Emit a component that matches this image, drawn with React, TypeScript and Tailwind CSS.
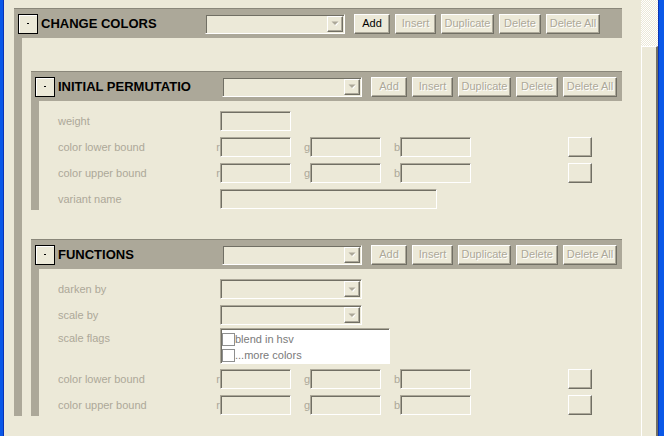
const raised =
  "border border-t-white border-l-white border-r-[#716f64] border-b-[#716f64] shadow-[inset_-1px_-1px_0_#aca899]";
const sunken =
  "border border-t-[#aca899] border-l-[#aca899] border-r-white border-b-white shadow-[inset_1px_1px_0_#716f64]";

function WinButton({ label, w, enabled = false }: { label: string; w: string; enabled?: boolean }) {
  return (
    <div
      className={`${w} h-[20px] flex items-center justify-center bg-[#ece9d8] text-[11px] ${raised} ${
        enabled ? "text-black" : "text-[#aca899] [text-shadow:1px_1px_0_#ffffff]"
      }`}
    >
      {label}
    </div>
  );
}

function Arrow() {
  return (
    <div className={`w-[16px] h-full flex items-center justify-center bg-[#ece9d8] ${raised}`}>
      <svg width="8" height="5" viewBox="0 0 8 5">
        <path d="M1 1h6L4 4.5z" fill="#ffffff" transform="translate(1 0.5)" />
        <path d="M0.5 0.5h7L4 4z" fill="#aca899" />
      </svg>
    </div>
  );
}

function Combo({ w }: { w: string }) {
  return (
    <div className={`${w} h-[20px] bg-[#ece9d8] flex justify-end p-[1px] ${sunken}`}>
      <Arrow />
    </div>
  );
}

function Input({ w }: { w: string }) {
  return <div className={`${w} h-[20px] bg-[#ece9d8] ${sunken}`} />;
}

function Section({
  title,
  addEnabled = false,
  children,
}: {
  title: string;
  addEnabled?: boolean;
  children: React.ReactNode;
}) {
  return (
    <div className="flex flex-col">
      <div className="h-[30px] flex items-center bg-[#aca899] border-t border-[#8a877a]">
        <div className="ml-[4px] w-[20px] h-[20px] flex items-center justify-center bg-[#ece9d8] border border-black shadow-[inset_1px_1px_0_#ffffff]">
          <div className="w-[2px] h-[1px] bg-black" />
        </div>
        <div className="w-[167px] pl-[3px] text-[13px] font-bold text-black whitespace-nowrap overflow-hidden">
          {title}
        </div>
        <Combo w="w-[140px]" />
        <div className="ml-[9px] flex gap-[5px]">
          <WinButton label="Add" w="w-[36px]" enabled={addEnabled} />
          <WinButton label="Insert" w="w-[41px]" />
          <WinButton label="Duplicate" w="w-[53px]" />
          <WinButton label="Delete" w="w-[42px]" />
          <WinButton label="Delete All" w="w-[54px]" />
        </div>
      </div>
      <div className="flex">
        <div className="w-[8px] bg-[#aca899]" />
        <div className="flex-1">{children}</div>
      </div>
    </div>
  );
}

function Label({ text }: { text: string }) {
  return <div className="w-[153px] text-[11px] text-[#aca899]">{text}</div>;
}

function Slot({ text, w }: { text: string; w: string }) {
  return <div className={`${w} text-right text-[11px] text-[#aca899] leading-[20px]`}>{text}</div>;
}

function ColorRow({ label }: { label: string }) {
  return (
    <div className="h-[20px] flex items-center">
      <Label text={label} />
      <Slot text="r" w="w-[9px]" />
      <Input w="w-[71px]" />
      <Slot text="g" w="w-[19px]" />
      <Input w="w-[71px]" />
      <Slot text="b" w="w-[19px]" />
      <Input w="w-[71px]" />
      <div className={`ml-[97px] w-[24px] h-[20px] bg-[#ece9d8] ${raised}`} />
    </div>
  );
}

function Check({ text }: { text: string }) {
  return (
    <div className="h-[16px] flex items-center">
      <div className="w-[13px] h-[13px] border border-[#8e8f8f] bg-white" />
      <span className="text-[11px] text-[#7a7a7a] leading-none">{text}</span>
    </div>
  );
}

export default function App() {
  return (
    <div className="w-[664px] h-[436px] flex bg-[#ece9d8] overflow-hidden font-['Liberation_Sans',Arial,sans-serif]">
      <div className="w-[4px] h-full bg-[#0a58e8] border-r border-[#0833b8]" />
      <div className="w-[637px] h-full pl-[10px] pr-[19px] pt-[8px]">
        <Section title="CHANGE COLORS" addEnabled>
          <div className="pl-[9px] pt-[33px]">
            <Section title="INITIAL PERMUTATIO">
              <div className="pl-[19px] pt-[10px] pb-[1px] flex flex-col gap-[6px]">
                <div className="h-[20px] flex items-center">
                  <Label text="weight" />
                  <div className="w-[9px]" />
                  <Input w="w-[71px]" />
                </div>
                <ColorRow label="color lower bound" />
                <ColorRow label="color upper bound" />
                <div className="h-[20px] flex items-center">
                  <Label text="variant name" />
                  <div className="w-[9px]" />
                  <Input w="w-[217px]" />
                </div>
              </div>
            </Section>
            <div className="h-[29px]" />
            <Section title="FUNCTIONS">
              <div className="pl-[19px] pt-[10px] pb-[1px] flex flex-col">
                <div className="h-[20px] flex items-center">
                  <Label text="darken by" />
                  <div className="w-[9px]" />
                  <Combo w="w-[142px]" />
                </div>
                <div className="mt-[6px] h-[20px] flex items-center">
                  <Label text="scale by" />
                  <div className="w-[9px]" />
                  <Combo w="w-[142px]" />
                </div>
                <div className="mt-[3px] flex items-start">
                  <div className="h-[20px] flex items-center">
                    <Label text="scale flags" />
                  </div>
                  <div className="w-[9px]" />
                  <div className={`w-[170px] h-[36px] bg-white pt-[2px] pl-[1px] ${sunken}`}>
                    <Check text="blend in hsv" />
                    <Check text="...more colors" />
                  </div>
                </div>
                <div className="mt-[5px]">
                  <ColorRow label="color lower bound" />
                </div>
                <div className="mt-[6px]">
                  <ColorRow label="color upper bound" />
                </div>
              </div>
            </Section>
          </div>
        </Section>
      </div>
      <div className="w-[17px] h-full flex flex-col">
        <div className="h-[46px] bg-[image:repeating-conic-gradient(#ffffff_0_25%,#ece9d8_0_50%)] bg-size-[2px_2px]" />
        <div className="flex-1 bg-[#ece9d8] border-t border-l border-white border-r-2 border-r-[#716f64]" />
      </div>
      <div className="w-[6px] h-full bg-[#0a58e8] border-l border-[#0833b8]" />
    </div>
  );
}
